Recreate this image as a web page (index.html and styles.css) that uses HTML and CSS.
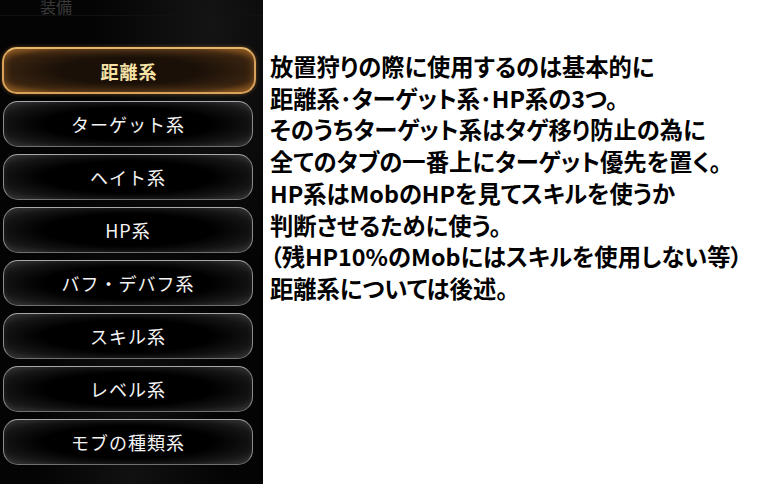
FILE: index.html
```html
<!DOCTYPE html>
<html lang="ja">
<head>
<meta charset="utf-8">
<link rel="stylesheet" href="styles.css">
</head>
<body>
<div class="page">
  <div class="panel">
    <div class="panel-head">装備</div>
    <div class="tabs">
      <div class="tab active">距離系</div>
      <div class="tab">ターゲット系</div>
      <div class="tab">ヘイト系</div>
      <div class="tab">HP系</div>
      <div class="tab">バフ・デバフ系</div>
      <div class="tab">スキル系</div>
      <div class="tab">レベル系</div>
      <div class="tab">モブの種類系</div>
    </div>
  </div>
  <div class="note">
    <p>放置狩りの際に使用するのは基本的に</p>
    <p>距離系･ターゲット系･HP系の3つ。</p>
    <p>そのうちターゲット系はタゲ移り防止の為に</p>
    <p>全てのタブの一番上にターゲット優先を置く。</p>
    <p>HP系はMobのHPを見てスキルを使うか</p>
    <p>判断させるために使う。</p>
    <p>（残HP10%のMobにはスキルを使用しない等）</p>
    <p>距離系については後述。</p>
  </div>
</div>
</body>
</html>
```

FILE: styles.css
```css
html, body {
  margin: 0;
  padding: 0;
  background: #ffffff;
}
.page {
  display: flex;
  width: 764px;
  height: 484px;
  overflow: hidden;
}
.panel {
  width: 263px;
  height: 484px;
  flex: none;
  background:
    radial-gradient(ellipse at 80% 5%, #141414 0%, rgba(0,0,0,0) 40%),
    radial-gradient(ellipse at 50% 100%, #111 0%, rgba(0,0,0,0) 50%),
    #040404;
  font-family: "Noto Sans CJK JP", "Noto Sans", sans-serif;
}
.panel-head {
  height: 18px;
  margin-top: -3px;
  padding-left: 40px;
  color: #3a3a3a;
  font-size: 16px;
  line-height: 18px;
  border-bottom: 1px solid #111;
}
.tabs {
  display: flex;
  flex-direction: column;
  gap: 6px;
  padding-top: 31px;
  padding-left: 3px;
}
.tab {
  width: 250px;
  height: 46px;
  box-sizing: border-box;
  border: 1px solid #8c8c8c;
  border-top-color: #a8a8a8;
  border-bottom-color: #707070;
  border-radius: 15px;
  background: radial-gradient(ellipse 62% 65% at 50% 50%, #000 55%, #151515 85%, #262626 100%);
  box-shadow: inset 0 0 6px rgba(255,255,255,0.07);
  color: #f4f4f4;
  font-size: 18px;
  letter-spacing: 1px;
  display: flex;
  align-items: center;
  justify-content: center;
  margin-top: 1px;
}
.tab.active {
  width: 254px;
  height: 47px;
  margin-left: -1px;
  margin-top: 0;
  border: 2px solid #d9a25a;
  border-top-color: #e6b56e;
  background: radial-gradient(ellipse 62% 65% at 50% 50%, #1a1008 45%, #3a2410 85%, #6a4218 100%);
  box-shadow: 0 0 4px rgba(210,140,60,0.45), inset 0 0 8px rgba(240,160,70,0.35);
  color: #f6e2a6;
  font-weight: bold;
}
.note {
  flex: 1;
  padding-left: 7px;
  padding-top: 51px;
  font-family: "Noto Sans CJK JP", sans-serif;
  font-weight: bold;
  font-size: 23.3px;
  line-height: 31.7px;
  color: #000;
  font-feature-settings: "palt";
  white-space: nowrap;
}
.note p {
  margin: 0;
}
```
